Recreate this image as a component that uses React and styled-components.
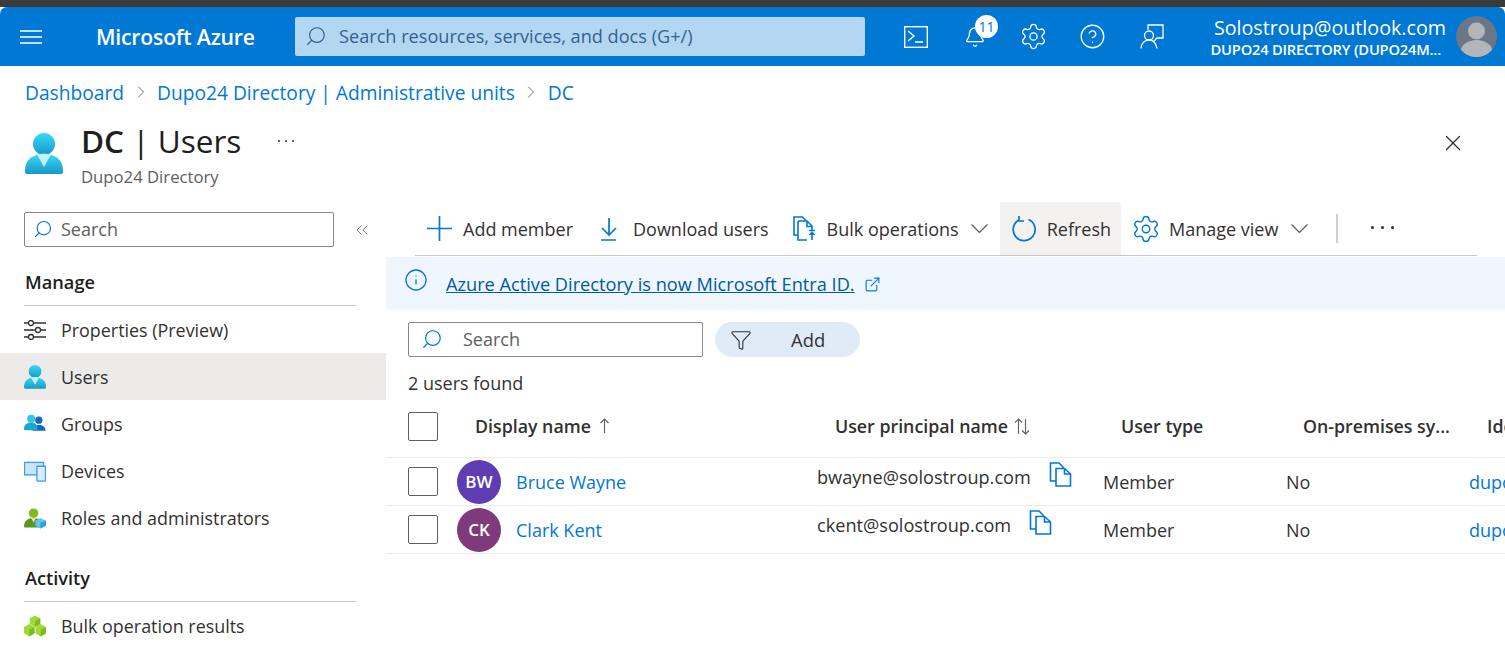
import React from 'react'
import styled, { createGlobalStyle } from 'styled-components'
import {
  Search as SearchIcon, Bell, Settings, CircleHelp, ChevronRight,
  X, ChevronsLeft, Info, ExternalLink, Filter,
} from 'lucide-react'

const Global = createGlobalStyle`
  html, body { margin: 0; padding: 0; background: #fff; }
  body { font-family: "Open Sans", "Noto Sans", sans-serif; color: #323130; }
  * { box-sizing: border-box; }
`

const Page = styled.div`
  width: 1505px;
  height: 669px;
  overflow: hidden;
  background: #3a3a3a;
  padding-top: 7px;
`
const Sheet = styled.div`
  height: 662px;
  background: #fff;
`
const TopBar = styled.header`
  height: 59px;
  background: #0078d4;
  border-radius: 7px 7px 0 0;
  display: flex;
  align-items: center;
  color: #fff;
  padding-left: 20px;
`
const Brand = styled.div`
  font-size: 21.2px;
  font-weight: 600;
  letter-spacing: -0.2px;
  margin-left: 54px;
  margin-top: -1px;
  width: 199px;
  white-space: nowrap;
`
const GlobalSearch = styled.div`
  width: 570px;
  height: 39px;
  margin-top: -1px;
  border-radius: 2px;
  background: #b3d6f2;
  display: flex;
  align-items: center;
  gap: 12px;
  padding-left: 10px;
  color: #33638f;
  font-size: 18.15px;
`
const TopIcons = styled.div`
  display: flex;
  align-items: center;
  margin-left: 21px;
`
const TopIcon = styled.div`
  width: 59px;
  height: 59px;
  display: flex;
  align-items: center;
  justify-content: center;
  position: relative;
`
const Badge = styled.span`
  position: absolute;
  top: 8px;
  left: 30px;
  width: 23px;
  height: 23px;
  border-radius: 50%;
  background: #fff;
  color: #0078d4;
  font-size: 14px;
  display: flex;
  align-items: center;
  justify-content: center;
`
const Account = styled.div`
  width: 270px;
  margin-left: 3px;
  margin-top: 3px;
  text-align: right;
`
const AccountName = styled.div`
  font-size: 19.7px;
  line-height: 22px;
  padding-right: 8px;
  white-space: nowrap;
`
const AccountDir = styled.div`
  font-size: 14.7px;
  line-height: 20px;
  font-weight: 600;
  white-space: nowrap;
  padding-right: 13px;
  letter-spacing: -0.2px;
`
const Avatar = styled.div`
  width: 41px;
  height: 41px;
  border-radius: 50%;
  overflow: hidden;
  background: #6b7785;
  margin-left: 2px;
  flex: none;
`
const Crumbs = styled.nav`
  display: flex;
  align-items: center;
  height: 52px;
  padding-left: 25px;
  font-size: 19.2px;
  color: #0078d4;
  gap: 6.5px;
  svg { color: #605e5c; }
`
const TitleRow = styled.div`
  height: 84px;
  display: flex;
  align-items: flex-start;
  padding-left: 25px;
`
const TitleIcon = styled.div`
  width: 38px;
  margin-top: 15px;
  margin-right: 18px;
`
const TitleText = styled.div`
  width: 197px;
  padding-top: 1px;
`
const Title = styled.h1`
  margin: 0;
  font-size: 31.5px;
  font-weight: 400;
  line-height: 44px;
  color: #201f1e;
  white-space: nowrap;
  b { font-weight: 600; }
`
const Subtitle = styled.div`
  font-size: 16.7px;
  color: #605e5c;
  line-height: 22px;
  margin-top: 3px;
`
const TitleMore = styled.div`
  margin-top: 22px;
  color: #323130;
  display: flex;
`
const CloseBox = styled.div`
  margin-left: auto;
  margin-right: 39px;
  margin-top: 12px;
  color: #323130;
`
const Body = styled.div`
  display: flex;
  height: 467px;
`
const Sidebar = styled.aside`
  width: 386px;
  flex: none;
  padding-top: 10px;
`
const SideSearchRow = styled.div`
  display: flex;
  align-items: center;
  padding-left: 24px;
  gap: 18px;
  color: #605e5c;
`
const SearchBox = styled.div`
  width: ${p => p.$w}px;
  height: ${p => p.$h}px;
  border: 1px solid #8a8886;
  border-radius: 2px;
  display: flex;
  align-items: center;
  gap: ${p => p.$gap}px;
  padding: 0 0 2px ${p => p.$pad}px;
  color: #605e5c;
  font-size: 18px;
  svg { color: #0078d4; flex: none; }
`
const SectionTitle = styled.div`
  margin: ${p => p.$top}px 30px 0 24px;
  padding-left: 1px;
  height: 38px;
  line-height: 28px;
  border-bottom: 1px solid #c8c6c4;
  font-size: 18.2px;
  font-weight: 600;
  color: #201f1e;
`
const NavItem = styled.div`
  height: 47px;
  display: flex;
  align-items: center;
  gap: 15px;
  padding: 1px 0 0 24px;
  font-size: 17.9px;
  color: #323130;
  background: ${p => (p.$active ? '#edebe9' : 'transparent')};
  svg { flex: none; width: 22px; }
`
const Main = styled.main`
  flex: 1;
  min-width: 0;
`
const Toolbar = styled.div`
  margin: 0 28px 0 29px;
  height: 54px;
  border-bottom: 1px solid #c8c6c4;
  display: flex;
  align-items: stretch;
  font-size: 18px;
  color: #323130;
`
const ToolButton = styled.div`
  display: flex;
  align-items: center;
  gap: ${p => p.$gap || 10}px;
  padding: 0 ${p => p.$pr || 12}px 0 ${p => p.$pl || 12}px;
  white-space: nowrap;
  background: ${p => (p.$hover ? '#f3f2f1' : 'transparent')};
  svg { flex: none; color: #0078d4; }
  svg.plain { color: #605e5c; margin-left: 2px; }
  svg.gear { margin: 0 -2.500px; }
`
const ToolDivider = styled.div`
  width: 2px;
  height: 29px;
  background: #d2d0ce;
  align-self: center;
  margin: 0 33px 0 16px;
`
const ToolDots = styled.div`
  align-self: center;
  display: flex;
  margin-top: -2px;
  color: #323130;
`
const Banner = styled.div`
  margin-top: 1px;
  height: 53px;
  background: #eff6fe;
  display: flex;
  align-items: center;
  padding-left: 18px;
  gap: 18px;
  font-size: 18.2px;
  color: #005a9e;
  svg { color: #0078d4; flex: none; }
  svg.info { margin-top: -7px; }
  svg.out { margin-left: -9px; margin-top: 1px; }
`
const BannerLink = styled.a`
  color: #005a9e;
  text-decoration: underline;
`
const FilterRow = styled.div`
  display: flex;
  gap: 12px;
  margin: 12px 0 0 22px;
`
const AddPill = styled.div`
  width: 145px;
  height: 35px;
  border-radius: 18px;
  background: #dfecf8;
  display: flex;
  align-items: center;
  padding-left: 15px;
  gap: 39px;
  font-size: 18.4px;
  svg { color: #323130; }
`
const Found = styled.div`
  margin: 13px 0 0 22px;
  height: 26px;
  line-height: 26px;
  font-size: 18px;
`
const HeadRow = styled.div`
  display: grid;
  grid-template-columns: 67px 360px 286px 182px 184px 200px;
  align-items: center;
  height: 62px;
  padding: 0 0 1px 22px;
  border-bottom: 1px solid #edebe9;
  font-size: 17.8px;
  font-weight: 600;
  color: #323130;
`
const HeadCell = styled.div`
  white-space: nowrap;
  overflow: hidden;
  display: flex;
  align-items: center;
  gap: ${p => p.$gap || 6}px;
  svg { flex: none; color: #605e5c; }
`
const Row = styled.div`
  height: 48px;
  display: flex;
  align-items: center;
  padding-left: 22px;
  border-bottom: 1px solid #edebe9;
  font-size: 18px;
  white-space: nowrap;
`
const Check = styled.div`
  width: 30px;
  height: 29px;
  border: 1px solid #605e5c;
  border-radius: 2px;
  flex: none;
`
const Initials = styled.div`
  width: 44px;
  height: 44px;
  border-radius: 50%;
  background: ${p => p.$bg};
  color: #fff;
  font-size: 17px;
  font-weight: 600;
  display: flex;
  align-items: center;
  justify-content: center;
  margin-left: 19px;
  flex: none;
`
const NameLink = styled.a`
  color: #0078d4;
  width: 301px;
  margin-left: 15px;
  flex: none;
`
const Principal = styled.div`
  width: 286px;
  flex: none;
  display: flex;
  align-items: flex-start;
  gap: ${p => p.$gap}px;
  margin-top: -10px;
  font-size: 18.15px;
  svg { color: #0078d4; margin-top: -3px; }
`
const TypeCell = styled.div`
  width: 183px;
  flex: none;
`
const Blue = styled.a`
  color: #0078d4;
`

const HamburgerGlyph = () => (
  <svg width="22" height="16" viewBox="0 0 22 16" stroke="#fff" strokeWidth="1.300">
    <path d="M0 2h22M0 8h22M0 14h22" />
  </svg>
)

const TerminalGlyph = () => (
  <svg width="24" height="22" viewBox="0 0 24 22" fill="none" stroke="#fff" strokeWidth="1.400">
    <rect x="0.700" y="0.700" width="22.600" height="20.600" />
    <path d="m4 5 6 5-6 5M11 16h8" />
  </svg>
)

const FeedbackGlyph = () => (
  <svg width="24" height="25" viewBox="0 0 24 25" fill="none" stroke="#fff" strokeWidth="1.300">
    <path d="M8 6V1h15v13h-6l-3 3" />
    <circle cx="9" cy="11.500" r="4.500" />
    <path d="M1 24.500c0-5 3.500-8.500 8-8.500s7 3 8 8.500" />
  </svg>
)

const UserGlyph = ({ size = 38 }) => (
  <svg width={size} height={size * 1.08} viewBox="0 0 38 41">
    <defs>
      <linearGradient id="ug" x1="0" y1="0" x2="0" y2="1">
        <stop offset="0" stopColor="#37d8f8" />
        <stop offset="1" stopColor="#1a98c6" />
      </linearGradient>
    </defs>
    <circle cx="19" cy="11" r="11" fill="url(#ug)" />
    <path d="M0 39c0-2 0-6 2-10 3-5 9-8 17-8s14 3 17 8c2 4 2 8 2 10 0 1-1 2-2 2H2c-1 0-2-1-2-2z" fill="url(#ug)" />
    <path d="M12 21.500 19 34l7-12.500c-4-1-10-1-14 0z" fill="#c5f2f9" />
  </svg>
)

const SlidersGlyph = () => (
  <svg width="22" height="20" viewBox="0 0 22 20" fill="none" stroke="#323130" strokeWidth="1.300">
    <path d="M0 3h4M10 3h12M0 10h11M17 10h5M0 17h4M10 17h12" />
    <circle cx="7" cy="3" r="2.500" />
    <circle cx="14" cy="10" r="2.500" />
    <circle cx="7" cy="17" r="2.500" />
  </svg>
)

const PeopleGlyph = () => (
  <svg width="22" height="20" viewBox="0 0 23 20">
    <circle cx="15.500" cy="6" r="3.800" fill="#0f6cbd" />
    <path d="M9 17c0-4 2.500-6 6.500-6s7 2 7 6z" fill="#0f6cbd" />
    <circle cx="7.500" cy="4.500" r="4.200" fill="#32c4ea" />
    <path d="M0 15c0-4 3-6.500 7.500-6.500S14 11 14 15c0 1-.5 1.500-1 1.500H1c-.5 0-1-.5-1-1.500z" fill="#1ea6d2" />
  </svg>
)

const DeviceGlyph = () => (
  <svg width="22" height="21" viewBox="0 0 23 21">
    <rect x="0.500" y="1" width="20" height="13" fill="#c7e4fb" stroke="#3f9bec" strokeWidth="1.400" />
    <rect x="13.500" y="5" width="9" height="15.500" rx="0.500" fill="#d8edfd" stroke="#3f9bec" strokeWidth="1.400" />
  </svg>
)

const RolesGlyph = () => (
  <svg width="22" height="22" viewBox="0 0 23 22">
    <circle cx="10" cy="6" r="5" fill="#86b820" />
    <path d="M0 20c0-6 4-9 10-9s9 3 10 9c0 .6-.5 1-1 1H1c-.5 0-1-.4-1-1z" fill="#5e9624" />
    <path d="M7.500 11 10 16l2.500-5z" fill="#d4ecb0" />
    <path d="m17 11 6 3v5l-6 3-5-3v-5z" fill="#5fc8f0" />
    <path d="m17 16 6-2.500v5.500l-6 3z" fill="#2ea6dd" />
  </svg>
)

const CubesGlyph = () => (
  <svg width="22" height="22" viewBox="0 0 23 22">
    <path d="m11.500 0 5.500 3v6l-5.500 3L6 9V3z" fill="#a3d936" />
    <path d="m11.500 6 5.500-3v6l-5.500 3z" fill="#7cb820" />
    <path d="m5.500 9 5.500 3v6.500L5.500 22 0 18.500V12z" fill="#a3d936" />
    <path d="m5.500 15 5.500-3v6.500L5.500 22z" fill="#7cb820" />
    <path d="m17.500 9 5.500 3v6.500L17.500 22 12 18.500V12z" fill="#a3d936" />
    <path d="m17.500 15 5.500-3v6.500L17.500 22z" fill="#7cb820" />
  </svg>
)

const PlusGlyph = () => (
  <svg width="25" height="25" viewBox="0 0 25 25" stroke="currentColor" strokeWidth="1.700">
    <path d="M0 12.500h25M12.500 0v25" />
  </svg>
)

const CopyGlyph = () => (
  <svg width="23" height="25" viewBox="0 0 23 25" fill="none" stroke="currentColor" strokeWidth="1.600">
    <path d="M7 19H1.500V1H10l4 4v2" />
    <path d="M7 6.500h8.500l6 5.500v12H7z" fill="#fff" />
    <path d="M15.500 6.500V12h6" />
  </svg>
)

const BulkGlyph = () => (
  <svg width="24" height="25" viewBox="0 0 24 25" fill="none" stroke="currentColor" strokeWidth="1.600">
    <path d="M5 19H1V1h8.500L13 4.500" />
    <path d="M5 5h9l5 5v4M5 5v19h9" />
    <path d="M14 5v5.500h5" />
    <path d="M19 24v-7M16.500 19l2.500-2.500 2.500 2.500M16 14.500h6" />
  </svg>
)

const RefreshGlyph = () => (
  <svg width="25" height="26" viewBox="0 0 25 26" fill="none" stroke="currentColor" strokeWidth="1.700">
    <path d="M16.500 3.500a11 11 0 1 1-9.500.4" />
    <path d="M7 0v5h5" />
  </svg>
)

const DownloadGlyph = () => (
  <svg width="20" height="24" viewBox="0 0 20 24" fill="none" stroke="currentColor" strokeWidth="1.700">
    <path d="M10 1v17M3 11l7 7 7-7M2 23h15" />
  </svg>
)

const ChevronGlyph = () => (
  <svg className="plain" width="17" height="9" viewBox="0 0 17 9" fill="none" stroke="currentColor" strokeWidth="1.200">
    <path d="m.5.500 8 8 8-8" />
  </svg>
)

const DotsGlyph = ({ step, r }) => (
  <svg width={step * 2 + r * 2} height={r * 2} fill="currentColor">
    <circle cx={r} cy={r} r={r} />
    <circle cx={r + step} cy={r} r={r} />
    <circle cx={r + step * 2} cy={r} r={r} />
  </svg>
)

const SortBoth = () => (
  <svg width="16" height="17" viewBox="0 0 16 17" fill="none" stroke="currentColor" strokeWidth="1.100">
    <path d="M4.500 16V1M1 4.500 4.500 1 8 4.500M11.500 1v15M8 12.500l3.500 3.500 3.500-3.500" />
  </svg>
)

const SortUp = () => (
  <svg width="11" height="16" viewBox="0 0 11 16" fill="none" stroke="currentColor" strokeWidth="1.100">
    <path d="M5.500 15V1M1.500 5l4-4 4 4" />
  </svg>
)

const PersonPhoto = () => (
  <svg width="41" height="41" viewBox="0 0 41 41">
    <circle cx="20.500" cy="15" r="8.500" fill="#b3b6b9" />
    <ellipse cx="20.500" cy="36" rx="16" ry="12" fill="#b3b6b9" />
  </svg>
)

const users = [
  { initials: 'BW', color: '#5e3db3', name: 'Bruce Wayne', mail: 'bwayne@solostroup.com', gap: 18 },
  { initials: 'CK', color: '#7f3a7c', name: 'Clark Kent', mail: 'ckent@solostroup.com', gap: 18 },
]

export default function App() {
  return (
    <Page>
      <Global />
      <Sheet>
        <TopBar>
          <HamburgerGlyph />
          <Brand>Microsoft Azure</Brand>
          <GlobalSearch>
            <SearchIcon size={22} strokeWidth={1.3} style={{ transform: 'scaleX(-1)' }} />
            Search resources, services, and docs (G+/)
          </GlobalSearch>
          <TopIcons>
            <TopIcon><TerminalGlyph /></TopIcon>
            <TopIcon><Bell size={22} strokeWidth={1.4} /><Badge>11</Badge></TopIcon>
            <TopIcon><Settings size={29} strokeWidth={1.1} /></TopIcon>
            <TopIcon><CircleHelp size={27} strokeWidth={1.2} /></TopIcon>
            <TopIcon><FeedbackGlyph /></TopIcon>
          </TopIcons>
          <Account>
            <AccountName>Solostroup@outlook.com</AccountName>
            <AccountDir>DUPO24 DIRECTORY (DUPO24M...</AccountDir>
          </Account>
          <Avatar><PersonPhoto /></Avatar>
        </TopBar>

        <Crumbs>
          Dashboard
          <ChevronRight size={20} strokeWidth={1.1} />
          Dupo24 Directory | Administrative units
          <ChevronRight size={20} strokeWidth={1.1} />
          DC
        </Crumbs>

        <TitleRow>
          <TitleIcon><UserGlyph /></TitleIcon>
          <TitleText>
            <Title><b>DC</b> | Users</Title>
            <Subtitle>Dupo24 Directory</Subtitle>
          </TitleText>
          <TitleMore><DotsGlyph step={7} r={1} /></TitleMore>
          <CloseBox><X size={26} strokeWidth={1.2} /></CloseBox>
        </TitleRow>

        <Body>
          <Sidebar>
            <SideSearchRow>
              <SearchBox $w={310} $h={35} $gap={8} $pad={8}>
                <SearchIcon size={20} strokeWidth={1.4} style={{ transform: 'scaleX(-1)' }} />
                Search
              </SearchBox>
              <ChevronsLeft size={20} strokeWidth={1} />
            </SideSearchRow>
            <SectionTitle $top={21}>Manage</SectionTitle>
            <NavItem><SlidersGlyph />Properties (Preview)</NavItem>
            <NavItem $active><UserGlyph size={22} />Users</NavItem>
            <NavItem><PeopleGlyph />Groups</NavItem>
            <NavItem><DeviceGlyph />Devices</NavItem>
            <NavItem><RolesGlyph />Roles and administrators</NavItem>
            <SectionTitle $top={23}>Activity</SectionTitle>
            <NavItem><CubesGlyph />Bulk operation results</NavItem>
          </Sidebar>

          <Main>
            <Toolbar>
              <ToolButton $gap={11}><PlusGlyph />Add member</ToolButton>
              <ToolButton $pl={14} $gap={14}><DownloadGlyph />Download users</ToolButton>
              <ToolButton><BulkGlyph />Bulk operations<ChevronGlyph /></ToolButton>
              <ToolButton $hover $pr={10}><RefreshGlyph />Refresh</ToolButton>
              <ToolButton $gap={11}><Settings className="gear" size={30} strokeWidth={1.1} />Manage view<ChevronGlyph /></ToolButton>
              <ToolDivider />
              <ToolDots><DotsGlyph step={10} r={1.5} /></ToolDots>
            </Toolbar>

            <Banner>
              <Info className="info" size={24} strokeWidth={1.3} />
              <BannerLink>Azure Active Directory is now Microsoft Entra ID.</BannerLink>
              <ExternalLink className="out" size={17} strokeWidth={1.6} />
            </Banner>

            <FilterRow>
              <SearchBox $w={295} $h={35} $gap={20} $pad={12}>
                <SearchIcon size={22} strokeWidth={1.3} style={{ transform: 'scaleX(-1)' }} />
                Search
              </SearchBox>
              <AddPill><Filter size={22} strokeWidth={1.2} />Add</AddPill>
            </FilterRow>

            <Found>2 users found</Found>

            <HeadRow>
              <Check />
              <HeadCell $gap={8}>Display name <SortUp /></HeadCell>
              <HeadCell>User principal name <SortBoth /></HeadCell>
              <HeadCell>User type</HeadCell>
              <HeadCell>On-premises sy...</HeadCell>
              <HeadCell>Identities</HeadCell>
            </HeadRow>

            {users.map(u => (
              <Row key={u.name}>
                <Check />
                <Initials $bg={u.color}>{u.initials}</Initials>
                <NameLink>{u.name}</NameLink>
                <Principal $gap={u.gap}>{u.mail}<CopyGlyph /></Principal>
                <TypeCell>Member</TypeCell>
                <TypeCell>No</TypeCell>
                <Blue>dupo24.onmicrosoft.com</Blue>
              </Row>
            ))}
          </Main>
        </Body>
      </Sheet>
    </Page>
  )
}
